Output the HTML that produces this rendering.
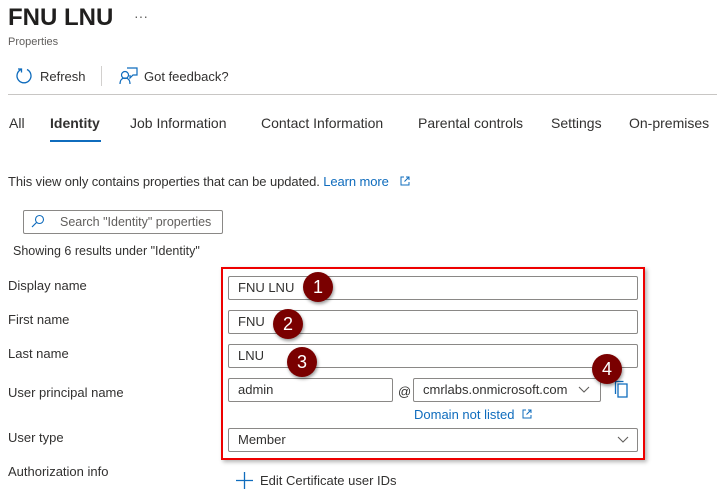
<!DOCTYPE html>
<html><head><meta charset="utf-8"><style>
*{margin:0;padding:0;box-sizing:border-box}
body{width:717px;height:499px;background:#fff;font-family:"Liberation Sans",sans-serif;color:#323130;position:relative;overflow:hidden;font-size:13px}
.a{position:absolute;white-space:nowrap}
.inp{position:absolute;border:1px solid #8a8886;border-radius:2px;height:24px;padding-left:9px;line-height:22px;font-size:13px;color:#323130;background:#fff}
.c{position:absolute;width:30px;height:30px;border-radius:50%;background:#7a0000;color:#fff;font-size:18px;text-align:center;line-height:30px;box-shadow:1px 2px 3px rgba(0,0,0,.4)}
.lbl{position:absolute;left:8px;font-size:13px}
.tab{position:absolute;top:115px;font-size:14px}
</style></head><body>
<div class="a" style="left:8px;top:4px;font-size:24px;font-weight:bold;color:#201f1e">FNU LNU</div>
<div class="a" style="left:134px;top:8px;font-size:14px;color:#605e5c">···</div>
<div class="a" style="left:8px;top:36px;font-size:11px;color:#605e5c">Properties</div>
<svg class="a" style="left:15px;top:67px" width="18" height="18" viewBox="0 0 18 18"><path d="M6 2.5A7 7 0 1 0 12 2.5" fill="none" stroke="#0f6cbd" stroke-width="1.3"/><path d="M3 2h3.5v3.5" fill="none" stroke="#0f6cbd" stroke-width="1.3"/></svg>
<div class="a" style="left:40px;top:69px;font-size:13px">Refresh</div>
<div class="a" style="left:101px;top:66px;width:1px;height:20px;background:#d2d0ce"></div>
<svg class="a" style="left:119px;top:66px" width="20" height="20" viewBox="0 0 20 20"><circle cx="6" cy="9" r="3.5" fill="none" stroke="#0f6cbd" stroke-width="1.2"/><path d="M1 18c0-4 2-6 5-6s5 2 5 6" fill="none" stroke="#0f6cbd" stroke-width="1.2"/><path d="M8 2h10v7h-4l-3 3V9" fill="none" stroke="#0f6cbd" stroke-width="1.2"/></svg>
<div class="a" style="left:144px;top:69px;font-size:13px">Got feedback?</div>
<div class="a" style="left:8px;top:94px;width:709px;height:1px;background:#c8c6c4"></div>
<div class="tab" style="left:9px">All</div>
<div class="tab" style="left:50px;font-weight:bold">Identity</div>
<div class="a" style="left:50px;top:140px;width:51px;height:2px;background:#0f6cbd"></div>
<div class="tab" style="left:130px">Job Information</div>
<div class="tab" style="left:261px">Contact Information</div>
<div class="tab" style="left:418px">Parental controls</div>
<div class="tab" style="left:551px">Settings</div>
<div class="tab" style="left:629px">On-premises</div>
<div class="a" style="left:8px;top:174px;font-size:13px;letter-spacing:-0.1px">This view only contains properties that can be updated. <span style="color:#0f6cbd">Learn more</span></div>
<svg class="a" style="left:400px;top:176px" width="10" height="10" viewBox="0 0 10 10"><path d="M4 1H1v8h8V6M6 1h3v3M9 1L4.5 5.5" fill="none" stroke="#0f6cbd" stroke-width="1"/></svg>
<div class="a" style="left:23px;top:210px;width:200px;height:24px;border:1px solid #8a8886;border-radius:2px"></div>
<svg class="a" style="left:31px;top:214px" width="14" height="14" viewBox="0 0 14 14"><circle cx="8.5" cy="5.5" r="4" fill="none" stroke="#0f6cbd" stroke-width="1.1"/><path d="M5.5 8.5L1 13" stroke="#0f6cbd" stroke-width="1.2"/></svg>
<div class="a" style="left:60px;top:215px;font-size:12.5px;color:#605e5c">Search "Identity" properties</div>
<div class="a" style="left:13px;top:244px;font-size:12.5px">Showing 6 results under "Identity"</div>
<div class="lbl" style="top:278px">Display name</div>
<div class="lbl" style="top:312px">First name</div>
<div class="lbl" style="top:346px">Last name</div>
<div class="lbl" style="top:385px">User principal name</div>
<div class="lbl" style="top:430px">User type</div>
<div class="lbl" style="top:464px">Authorization info</div>
<div class="a" style="left:221px;top:267px;width:424px;height:193px;border:2px solid #e00;box-shadow:2px 2px 4px rgba(0,0,0,.3)"></div>
<div class="inp" style="left:228px;top:276px;width:410px">FNU LNU</div>
<div class="inp" style="left:228px;top:310px;width:410px">FNU</div>
<div class="inp" style="left:228px;top:344px;width:410px">LNU</div>
<div class="inp" style="left:228px;top:378px;width:165px">admin</div>
<div class="a" style="left:398px;top:384px;font-size:13px">@</div>
<div class="inp" style="left:413px;top:378px;width:188px">cmrlabs.onmicrosoft.com</div>
<svg class="a" style="left:578px;top:386px" width="12" height="8" viewBox="0 0 12 8"><path d="M1 1l5 5 5-5" fill="none" stroke="#605e5c" stroke-width="1.1"/></svg>
<svg class="a" style="left:614px;top:380px" width="16" height="18" viewBox="0 0 16 18"><path d="M4 4h9v13H4z" fill="none" stroke="#0f6cbd" stroke-width="1.3"/><path d="M1.5 14V1.5h8" fill="none" stroke="#0f6cbd" stroke-width="1.3"/></svg>
<div class="a" style="left:414px;top:407px;font-size:13px;color:#0f6cbd">Domain not listed</div>
<svg class="a" style="left:522px;top:409px" width="10" height="10" viewBox="0 0 10 10"><path d="M4 1H1v8h8V6M6 1h3v3M9 1L4.5 5.5" fill="none" stroke="#0f6cbd" stroke-width="1"/></svg>
<div class="inp" style="left:228px;top:428px;width:410px">Member</div>
<svg class="a" style="left:617px;top:436px" width="12" height="8" viewBox="0 0 12 8"><path d="M1 1l5 5 5-5" fill="none" stroke="#605e5c" stroke-width="1.1"/></svg>
<div class="c" style="left:303px;top:272px">1</div>
<div class="c" style="left:273px;top:309px">2</div>
<div class="c" style="left:287px;top:347px">3</div>
<div class="c" style="left:592px;top:354px">4</div>
<svg class="a" style="left:236px;top:472px" width="17" height="17" viewBox="0 0 17 17"><path d="M8.5 0v17M0 8.5h17" stroke="#0f6cbd" stroke-width="1.3"/></svg>
<div class="a" style="left:260px;top:473px;font-size:13px">Edit Certificate user IDs</div>
</body></html>
